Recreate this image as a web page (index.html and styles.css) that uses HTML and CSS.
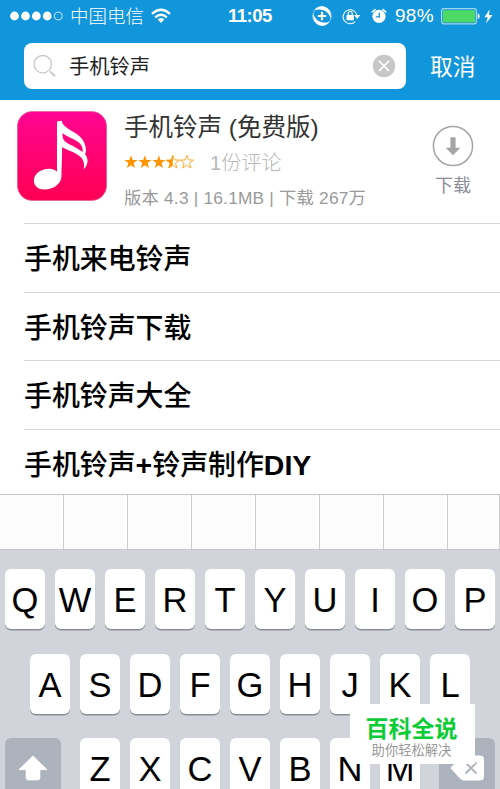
FILE: index.html
```html
<!DOCTYPE html>
<html lang="zh-CN">
<head>
<meta charset="utf-8">
<title>手机铃声</title>
<link rel="stylesheet" href="styles.css">
</head>
<body>
<div class="phone">
  <header class="header">
    <div class="status">
      <svg class="signal" width="54" height="10" viewBox="0 0 54 10"><g fill="#fff"><circle cx="4.5" cy="5" r="4.4"/><circle cx="15.5" cy="5" r="4.4"/><circle cx="26.3" cy="5" r="4.4"/><circle cx="37.2" cy="5" r="4.4"/></g><circle cx="48.3" cy="5" r="4" fill="none" stroke="#d5ecf8" stroke-width=".9"/></svg>
      <span class="carrier">中国电信</span>
      <svg class="wifi" width="20" height="16" viewBox="0 0 20 16"><g fill="none" stroke="#fff" stroke-width="2.3"><path d="M1 5.8Q10-2.2 19 5.8"/><path d="M4.2 9.3Q10 4.3 15.8 9.3"/></g><path d="M6.7 11.5Q10 8.7 13.3 11.5L10 15Z" fill="#fff"/></svg>
      <span class="time">11:05</span>
      <svg class="assist" width="20" height="20" viewBox="0 0 20 20"><circle cx="10" cy="10" r="9.3" fill="none" stroke="#a9d7f2" stroke-width=".8"/><path d="M2.500 4C6-.8 13-1.200 17.500 4.600C19.200 7.500 19 10.500 18.500 12.500C17.500 5.500 10 2 2.500 4Z" fill="#fff"/><path d="M17.500 16C14 20.800 7 21.200 2.500 15.400C.8 12.500 1 9.500 1.500 7.500C2.500 14.500 10 18 17.500 16Z" fill="#fff"/><path d="M10 5.800v8.400M5.800 10h8.400" stroke="#fff" stroke-width="2.200"/></svg>
      <svg class="lock" width="19" height="17" viewBox="0 0 19 17"><path d="M13.200 13.600A7 7 0 1 1 15 7.500" fill="none" stroke="#fff" stroke-width="1.100"/><path d="M12.200 7.100h6l-3 3.800Z" fill="#fff"/><rect x="4.500" y="7.100" width="7.400" height="5.200" rx=".6" fill="#fff"/><path d="M6.200 7.400V5.500a2 2 0 0 1 4 0v1.900" fill="none" stroke="#fff" stroke-width="1.200"/></svg>
      <svg class="alarm" width="16" height="16" viewBox="0 0 16 16"><circle cx="8" cy="8.300" r="6.600" fill="#fff"/><path d="M1.200 3.900L4 1.600M14.800 3.900L12 1.600" stroke="#fff" stroke-width="1.500" stroke-linecap="round"/><path d="M8.300 4.500v4.300H4.800" fill="none" stroke="#1296db" stroke-width="1.300"/></svg>
      <span class="percent">98%</span>
      <svg class="battery" width="39" height="17" viewBox="0 0 39 17"><rect x=".6" y=".7" width="34.800" height="15.100" rx="2.300" fill="none" stroke="#a4d6f2" stroke-width="1.200"/><rect x="2" y="2.200" width="32" height="12.200" fill="#4cd964"/><path d="M36.700 5.300q1.900.4 1.900 3t-1.900 3Z" fill="#fff"/></svg>
      <svg class="bolt" width="9" height="15" viewBox="0 0 9 15"><path d="M5.600.5L.4 8.200h3.200L2.200 14.300L8.600 6H5Z" fill="#fff"/></svg>
    </div>
    <div class="search-row">
      <div class="search">
        <svg class="glass" width="24" height="24" viewBox="0 0 24 24"><g fill="none" stroke="#c8c8c8"><circle cx="9.800" cy="10.200" r="8.700" stroke-width="1.300"/><path d="M17 17.400l5 4.900" stroke-width="1.900"/></g></svg>
        <span class="query">手机铃声</span>
        <svg class="clear" width="24" height="24" viewBox="0 0 24 24"><circle cx="12" cy="12" r="11.200" fill="#c7c7c7"/><path d="M7 7l10 10M17 7L7 17" stroke="#fff" stroke-width="1.700"/></svg>
      </div>
      <span class="cancel">取消</span>
    </div>
  </header>

  <section class="app">
    <svg class="app-icon" width="90" height="90" viewBox="0 0 90 90">
      <defs><linearGradient id="pink" x1="0" y1="0" x2="0" y2="1"><stop offset="0" stop-color="#ff0593"/><stop offset="1" stop-color="#ff0052"/></linearGradient></defs>
      <rect x=".4" y=".4" width="89.200" height="89.200" rx="15" fill="url(#pink)" stroke="#d85e94" stroke-width=".7"/>
      <path fill="#fff" fill-rule="evenodd" d="M40 10.500L44.600 9.800C47 21 68 20 69 39C69 41 68.500 42 68 43C72 48 71 54 66.800 58.300C67.500 53 67 49 63 45.500C57 40.500 49 39 45.200 36L44.400 66C44 73 36 78.500 27.500 78.500C20 78.500 16 73.500 17 68C18.300 61 27 56.500 35 58Q38 58.700 40 60.500ZM45.500 22C45 30 49 31.500 55 34.500Q60 37 65.700 41C67 29 52 28 45.500 22Z"/>
    </svg>
    <div class="info">
      <h1 class="title">手机铃声 (免费版)</h1>
      <div class="rating">
        <svg class="stars" width="70" height="14" viewBox="0 0 70 14">
          <defs><path id="star" d="M7 .3l1.700 4.600 4.900.2-3.900 3 1.400 4.900L7 10.300 2.900 13l1.400-4.900-3.900-3 4.900-.2Z"/></defs>
          <g fill="#ff9500"><use href="#star"/><use href="#star" x="13.900"/><use href="#star" x="27.900"/><path d="M48.800.3l-1.700 4.600-4.900.2 3.900 3-1.400 4.900 4.100-2.700Z"/></g>
          <g fill="none" stroke="#ff9500" stroke-width=".8"><use href="#star" x="41.800"/><use href="#star" x="55.800"/></g>
        </svg>
        <span class="reviews">1份评论</span>
      </div>
      <div class="meta">版本 4.3 | 16.1MB | 下载 267万</div>
    </div>
    <div class="download">
      <svg width="42" height="42" viewBox="0 0 42 42"><circle cx="21" cy="21" r="19.600" fill="none" stroke="#a5a5a5" stroke-width="1.500"/><path d="M18.400 12.300h5.200v10.500h4.700L21 30.200l-7.300-7.400h4.700Z" fill="#a5a5a5"/></svg>
      <span class="download-label">下载</span>
    </div>
  </section>

  <ul class="results">
    <li>手机来电铃声</li>
    <li>手机铃声下载</li>
    <li>手机铃声大全</li>
    <li>手机铃声<span class="latin">+</span>铃声制作<span class="latin">DIY</span></li>
  </ul>

  <section class="candidates"><i></i><i></i><i></i><i></i><i></i><i></i><i></i><i></i></section>

  <section class="keyboard">
    <div class="keys"><b>Q</b><b>W</b><b>E</b><b>R</b><b>T</b><b>Y</b><b>U</b><b>I</b><b>O</b><b>P</b></div>
    <div class="keys"><b>A</b><b>S</b><b>D</b><b>F</b><b>G</b><b>H</b><b>J</b><b>K</b><b>L</b></div>
    <div class="keys last">
      <div class="special"><svg width="30" height="26" viewBox="0 0 30 26"><path d="M15 .8L29.200 14.700H22v8.100q0 2.200-2.200 2.200H10.200q-2.200 0-2.200-2.200V14.700H.8Z" fill="#fff" stroke="#fff" stroke-width=".6" stroke-linejoin="round"/></svg></div>
      <b>Z</b><b>X</b><b>C</b><b>V</b><b>B</b><b>N</b><b>M</b>
      <div class="special"><svg width="34" height="26" viewBox="0 0 34 26"><path d="M.3 13L10 2.500Q12 .5 14 .5H30q4 0 4 4V21.500q0 4-4 4H14q-2 0-4-2Z" fill="#fff"/><path d="M15.500 7.500l11 11M26.500 7.500l-11 11" stroke="#adb3bd" stroke-width="1.900"/></svg></div>
    </div>
  </section>

  <aside class="badge">
    <span class="badge-name">百科全说</span>
    <span class="badge-note">助你轻松解决</span>
  </aside>
</div>
</body>
</html>
```
FILE: styles.css
```css
* { box-sizing: border-box; }
body { margin: 0; font-family: "Liberation Sans", "Noto Sans CJK SC", sans-serif; }
h1, ul { margin: 0; padding: 0; font-weight: 400; }
svg { display: block; flex: none; }
.phone { position: relative; width: 500px; height: 789px; overflow: hidden; background: #fff; white-space: nowrap; }

.header { height: 100px; background: #1296db; color: #fff; }
.status { display: flex; align-items: center; height: 32px; padding-left: 10px; }
.carrier { margin-left: 6px; width: 75px; padding-top: 1px; font-size: 18.500px; font-weight: 300; line-height: 24px; }
.wifi { margin-left: 6px; }
.time { margin-left: 57px; width: 44px; font-size: 18.500px; font-weight: 700; letter-spacing: -.5px; }
.assist { margin-left: 40px; }
.lock { margin-left: 10px; }
.alarm { margin-left: 10px; }
.percent { margin-left: 8px; width: 40px; font-size: 19px; letter-spacing: .3px; }
.battery { margin-left: 6px; }
.bolt { margin-left: 4px; }

.search-row { display: flex; align-items: center; padding: 11px 0 0 24px; }
.search { display: flex; align-items: center; width: 382px; height: 46px; padding: 0 10px 0 9px; border-radius: 8px; background: #fff; }
.query { flex: 1; margin-left: 12px; padding-top: 1px; color: #222; font-size: 20.300px; line-height: 30px; }
.cancel { margin-left: 24px; padding-top: 1px; font-size: 22.800px; line-height: 30px; }

.app { display: flex; height: 123px; padding: 10.500px 26px 0 16.500px; }
.info { flex: 1; padding-left: 17.500px; }
.title { color: #333; font-size: 24.500px; line-height: 33px; }
.rating { display: flex; align-items: center; height: 30px; margin-top: 4px; }
.stars { margin-top: -1px; }
.reviews { margin-left: 16px; padding-top: 1px; color: #b8b8b8; font-size: 20.200px; font-weight: 300; line-height: 30px; }
.meta { margin-top: 8px; color: #999; font-size: 17.300px; letter-spacing: .22px; line-height: 24px; }
.download { display: flex; flex-direction: column; align-items: center; padding-top: 14px; width: 42px; }
.download-label { margin-top: 6px; color: #8c8c99; font-size: 18px; line-height: 26px; }

.results { height: 271px; margin-left: 24px; list-style: none; }
.results li { height: 68.700px; border-top: 1px solid #d8d8d8; color: #000; font-size: 27.900px; font-weight: 500; line-height: 71px; }
.results li:last-child { height: 65px; }
.latin { font-size: 28.500px; font-weight: 700; line-height: 1; }

.candidates { display: flex; height: 56px; overflow: hidden; border-top: 1px solid #c5c6c9; border-bottom: 1px solid #c5c6c9; background: #fcfcfc; }
.candidates i { flex: none; width: 64px; border-right: 1px solid #cbccd0; }
.candidates i:last-child { width: 52px; }

.keyboard { height: 239px; padding-top: 19px; background: #d1d5db; }
.keys { display: flex; justify-content: center; gap: 10px; height: 60px; margin-bottom: 24.500px; }
.keys b { width: 40px; height: 60px; border-radius: 6px; background: #fff; box-shadow: 0 1.500px 0 #8b8e94; color: #000; font-size: 34.500px; font-weight: 400; line-height: 62px; text-align: center; }
.special { display: flex; align-items: center; justify-content: center; width: 56px; border-radius: 6px; background: #adb3bd; }
.special:first-child { margin-right: 9px; }
.special:last-child { margin-left: 9px; }

.badge { position: absolute; left: 350px; top: 704px; display: flex; flex-direction: column; align-items: center; width: 125px; height: 60px; padding: 11px 2px 0 0; background: #fff; }
.badge-name { color: #0bcc35; font-size: 23px; font-weight: 700; line-height: 28px; }
.badge-note { color: #999; font-size: 13.300px; line-height: 16px; }
```
